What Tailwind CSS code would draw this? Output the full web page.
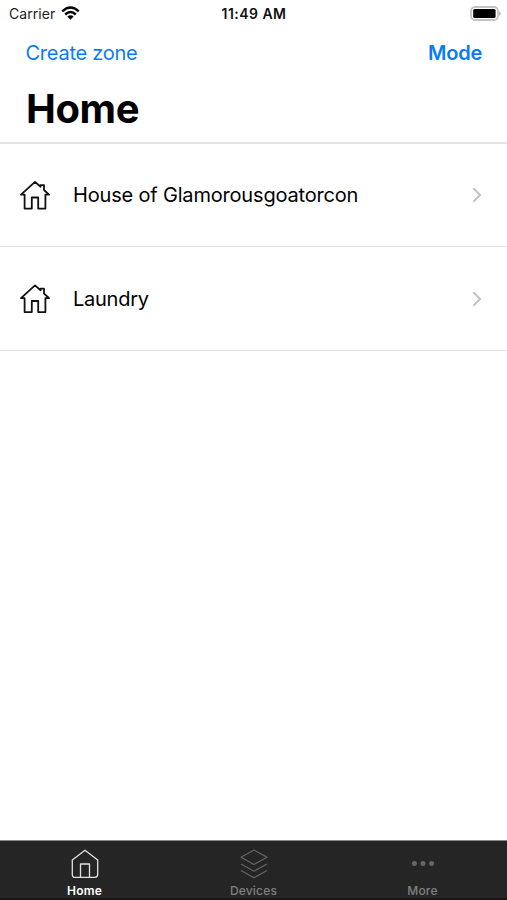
<!DOCTYPE html>
<html lang="en">
<head>
<meta charset="utf-8">
<title>Home</title>
<script src="https://cdn.jsdelivr.net/npm/@tailwindcss/browser@4"></script>
</head>
<body class="bg-white">
<div class="flex h-[900px] w-[507px] flex-col overflow-hidden bg-white font-['Inter','Liberation_Sans',sans-serif] text-black">
  <header class="h-[144px] shrink-0 border-b-2 border-[#e2e2e2]">
    <div class="grid h-[27px] grid-cols-3 items-center pl-[9px] pr-[6px]">
      <div class="flex items-center gap-[6px]">
        <span class="text-[14px] leading-[27px] tracking-[0.05px] text-[#222]">Carrier</span>
        <svg class="h-[15px] w-[19px]" viewBox="0 0 19 15" fill="none" stroke="#000" stroke-width="2.5"><path d="M1.2 5.3Q9.5-2.4 17.8 5.3M4.2 8.5Q9.5 3.6 14.8 8.5"/><path d="M6.4 10.6Q9.5 8 12.6 10.6L9.5 13.8Z" fill="#000" stroke="none"/></svg>
      </div>
      <span class="pr-[2px] text-center text-[14px] font-semibold leading-[27px] tracking-[0.45px] text-[#111]">11:49 AM</span>
      <svg class="h-[15px] w-[31px] justify-self-end" viewBox="0 0 31 15"><rect x="1" y="1" width="27" height="13" rx="4" fill="#fff" stroke="#c4c4c4" stroke-width="1.8"/><rect x="3.2" y="3" width="22.4" height="9" rx="1.6"/><path d="M29 5.3q1.8.8 1.8 2.2T29 9.7Z" fill="#b5b5b5"/></svg>
    </div>
    <div class="flex h-[51px] items-center justify-between pl-[25px] pr-[25px] text-[20px] text-[#087cf5]">
      <span class="pl-[0.5px] tracking-[-0.25px]">Create zone</span>
      <span class="font-semibold tracking-[-0.25px]">Mode</span>
    </div>
    <h1 class="pl-[26px] text-[40px] font-bold leading-[62px] tracking-[-0.4px]">Home</h1>
  </header>
  <main class="flex-1">
    <div class="flex h-[103px] items-center border-b border-[#e4e4e4] pl-[20px] pr-[25px]">
      <svg class="h-[30px] w-[30px] shrink-0" viewBox="0 0 30 30" fill="none" stroke="#111" stroke-width="1.8" stroke-linejoin="round"><path d="M1 14.7 15 1.9l5.6 4.8V5.2H24v4.8l5 4.7h-3.6v13.9h-7.2V17.5h-6.4v11.1H4.6V14.7Z"/></svg>
      <span class="ml-[23px] flex-1 text-[20px] tracking-[-0.18px]">House of Glamorousgoatorcon</span>
      <svg class="h-[16px] w-[10px]" viewBox="0 0 10 16" fill="none" stroke="#c3c3c5" stroke-width="2"><path d="m1.3 1.3 6.8 6.7-6.8 6.7"/></svg>
    </div>
    <div class="flex h-[104px] items-center border-b border-[#e4e4e4] pl-[20px] pr-[25px]">
      <svg class="h-[30px] w-[30px] shrink-0" viewBox="0 0 30 30" fill="none" stroke="#111" stroke-width="1.8" stroke-linejoin="round"><path d="M1 14.2 15 1.4l5.6 4.8V4.7H24v4.8l5 4.7h-3.6v13.9h-7.2V17h-6.4v11.1H4.6V14.2Z"/></svg>
      <span class="ml-[23px] flex-1 text-[20px] tracking-[-0.25px]">Laundry</span>
      <svg class="h-[16px] w-[10px]" viewBox="0 0 10 16" fill="none" stroke="#c3c3c5" stroke-width="2"><path d="m1.3 1.3 6.8 6.7-6.8 6.7"/></svg>
    </div>
  </main>
  <nav class="grid h-[60px] shrink-0 grid-cols-3 border-t border-[#888] border-b-2 border-b-[#1b1518] bg-[#252525] text-[12px] font-medium leading-[16px] tracking-[0.2px] text-[#808080]">
    <div class="flex flex-col items-center pt-[8px] text-white">
      <svg class="mb-[4px] h-[30px] w-[28px] shrink-0" viewBox="0 0 28 30" fill="none" stroke="#e2e2e2" stroke-width="1.3" stroke-linejoin="round"><path d="M14 1.2 26.7 11v14.6q0 2.8-2.8 2.8H4.1q-2.8 0-2.8-2.8V11Z"/><path d="M9.5 28.4V15h9v13.4"/></svg>
      <span class="font-semibold">Home</span>
    </div>
    <div class="flex flex-col items-center pt-[8px]">
      <svg class="mb-[4px] h-[30px] w-[28px] shrink-0" viewBox="0 0 28 30" fill="none" stroke="#646464" stroke-width="1.2" stroke-linejoin="round"><path d="M14 1 27 8.2 14 15.4 1 8.2ZM1 15l13 7.2L27 15M1 21.5l13 7.2 13-7.2"/></svg>
      <span>Devices</span>
    </div>
    <div class="flex flex-col items-center pt-[8px]">
      <svg class="mb-[4px] h-[30px] w-[28px] shrink-0" viewBox="0 0 28 30" fill="#666"><circle cx="5.4" cy="14.5" r="2.5"/><circle cx="14" cy="14.5" r="2.5"/><circle cx="22.6" cy="14.5" r="2.5"/></svg>
      <span>More</span>
    </div>
  </nav>
</div>
</body>
</html>
